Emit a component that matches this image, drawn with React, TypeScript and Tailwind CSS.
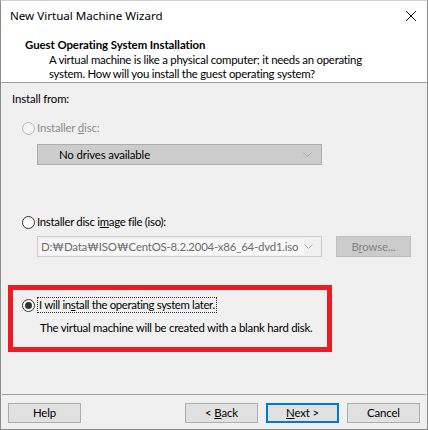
import React from "react";

function Radio({ checked, disabled }: { checked?: boolean; disabled?: boolean }) {
  return (
    <span
      className={`flex h-[13px] w-[13px] shrink-0 items-center justify-center rounded-full border ${
        disabled ? "border-[#bcbcbc] bg-[#f4f4f4]" : "border-[#333333] bg-white"
      }`}
    >
      {checked && <span className="h-[7px] w-[7px] rounded-full bg-[#333333]" />}
    </span>
  );
}

function Chevron({ color }: { color: string }) {
  return (
    <svg width="9" height="5" viewBox="0 0 9 5" className="shrink-0">
      <path d="M0.5 0.5 L4.5 4.5 L8.5 0.5" fill="none" stroke={color} strokeWidth="1" />
    </svg>
  );
}

function WizButton({ children, focused }: { children: React.ReactNode; focused?: boolean }) {
  return (
    <div
      className={`flex h-[20px] w-[73px] items-center justify-center bg-[#e1e1e1] text-black ${
        focused ? "border-2 border-[#0078d7]" : "border border-[#adadad]"
      }`}
    >
      <span>{children}</span>
    </div>
  );
}

export default function App() {
  return (
    <div className="flex h-[430px] w-[428px] flex-col border border-[#8a8a8a] border-t-[#cfcfcf] bg-[#f0f0f0] font-['Lato','Noto_Sans_CJK_KR',sans-serif] text-[11.4px] leading-[16px] tracking-[-0.15px] text-black">
      {/* title bar + header */}
      <div className="bg-white">
        <div className="flex h-[29px] items-center justify-between pl-[9px] pr-[8px]">
          <span className="font-['Noto_Sans',sans-serif] text-[11.6px] tracking-normal">New Virtual Machine Wizard</span>
          <svg width="12" height="12" viewBox="0 0 12 12" className="mr-[2px]">
            <path d="M1 1 L11 11 M11 1 L1 11" stroke="#111" strokeWidth="1" />
          </svg>
        </div>
        <div className="h-[52px] pl-[24px] pt-[7px]">
          <div className="font-bold leading-[16px] tracking-[-0.05px]">Guest Operating System Installation</div>
          <div className="pl-[24px] leading-[14px] tracking-[-0.25px]">
            A virtual machine is like a physical computer; it needs an operating
            <br />
            system. How will you install the guest operating system?
          </div>
        </div>
      </div>
      <div className="h-px bg-[#a0a0a0]" />

      {/* content */}
      <div className="flex h-[311px] flex-col whitespace-nowrap">
        <div className="ml-[11px] mt-[8px]">Install from:</div>

        <div className="ml-[21px] mt-[13px] flex items-center gap-[2px] text-[#8c8c8c]">
          <Radio disabled />
          <span>
            Installer <span className="underline">d</span>isc:
          </span>
        </div>
        <div className="ml-[36px] mt-[8px] flex h-[21px] w-[285px] items-center justify-between border border-[#adadad] bg-[#cccccc] pl-[21px] pr-[9px]">
          <span>No drives available</span>
          <Chevron color="#a8a8a8" />
        </div>

        <div className="ml-[21px] mt-[49px] flex items-center gap-[2px]">
          <Radio />
          <span className="tracking-[-0.3px]">
            Installer disc i<span className="underline">m</span>age file (iso):
          </span>
        </div>
        <div className="mt-[6px] flex items-center">
          <div className="ml-[36px] flex h-[21px] w-[285px] items-center justify-between border border-[#cccccc] bg-[#f0f0f0] pl-[2px] pr-[9px]">
            <span className="bg-[#f7f7f7] pl-px pr-[6px] tracking-[-0.2px] text-[#6d6d6d]">D:₩Data₩ISO₩CentOS-8.2.2004-x86_64-dvd1.iso</span>
            <Chevron color="#b4b4b4" />
          </div>
          <div className="ml-[14px] flex h-[21px] w-[75px] items-center justify-center border border-[#bfbfbf] bg-[#cccccc] text-[#838383]">
            <span>
              B<span className="underline">r</span>owse...
            </span>
          </div>
        </div>

        <div className="ml-[7px] mt-[28px] h-[67px] w-[324px] border-[5px] border-[#ed1c24] pl-[9px] pt-[7px]">
          <div className="flex items-center gap-[2px]">
            <Radio checked />
            <span className="border border-dotted border-[#333] px-px leading-[14px] tracking-[-0.35px]">
              I will in<span className="underline">s</span>tall the operating system later.
            </span>
          </div>
          <div className="ml-[18px] mt-[7px] tracking-[-0.25px]">The virtual machine will be created with a blank hard disk.</div>
        </div>
      </div>

      <div className="mx-px h-px bg-[#a0a0a0]" />

      {/* footer */}
      <div className="flex items-center justify-between pl-[7px] pr-[7px] pt-[8px]">
        <WizButton>Help</WizButton>
        <div className="flex gap-[8px]">
          <WizButton>
            &lt; <span className="underline">B</span>ack
          </WizButton>
          <WizButton focused>
            <span className="underline">N</span>ext &gt;
          </WizButton>
          <WizButton>Cancel</WizButton>
        </div>
      </div>
    </div>
  );
}
